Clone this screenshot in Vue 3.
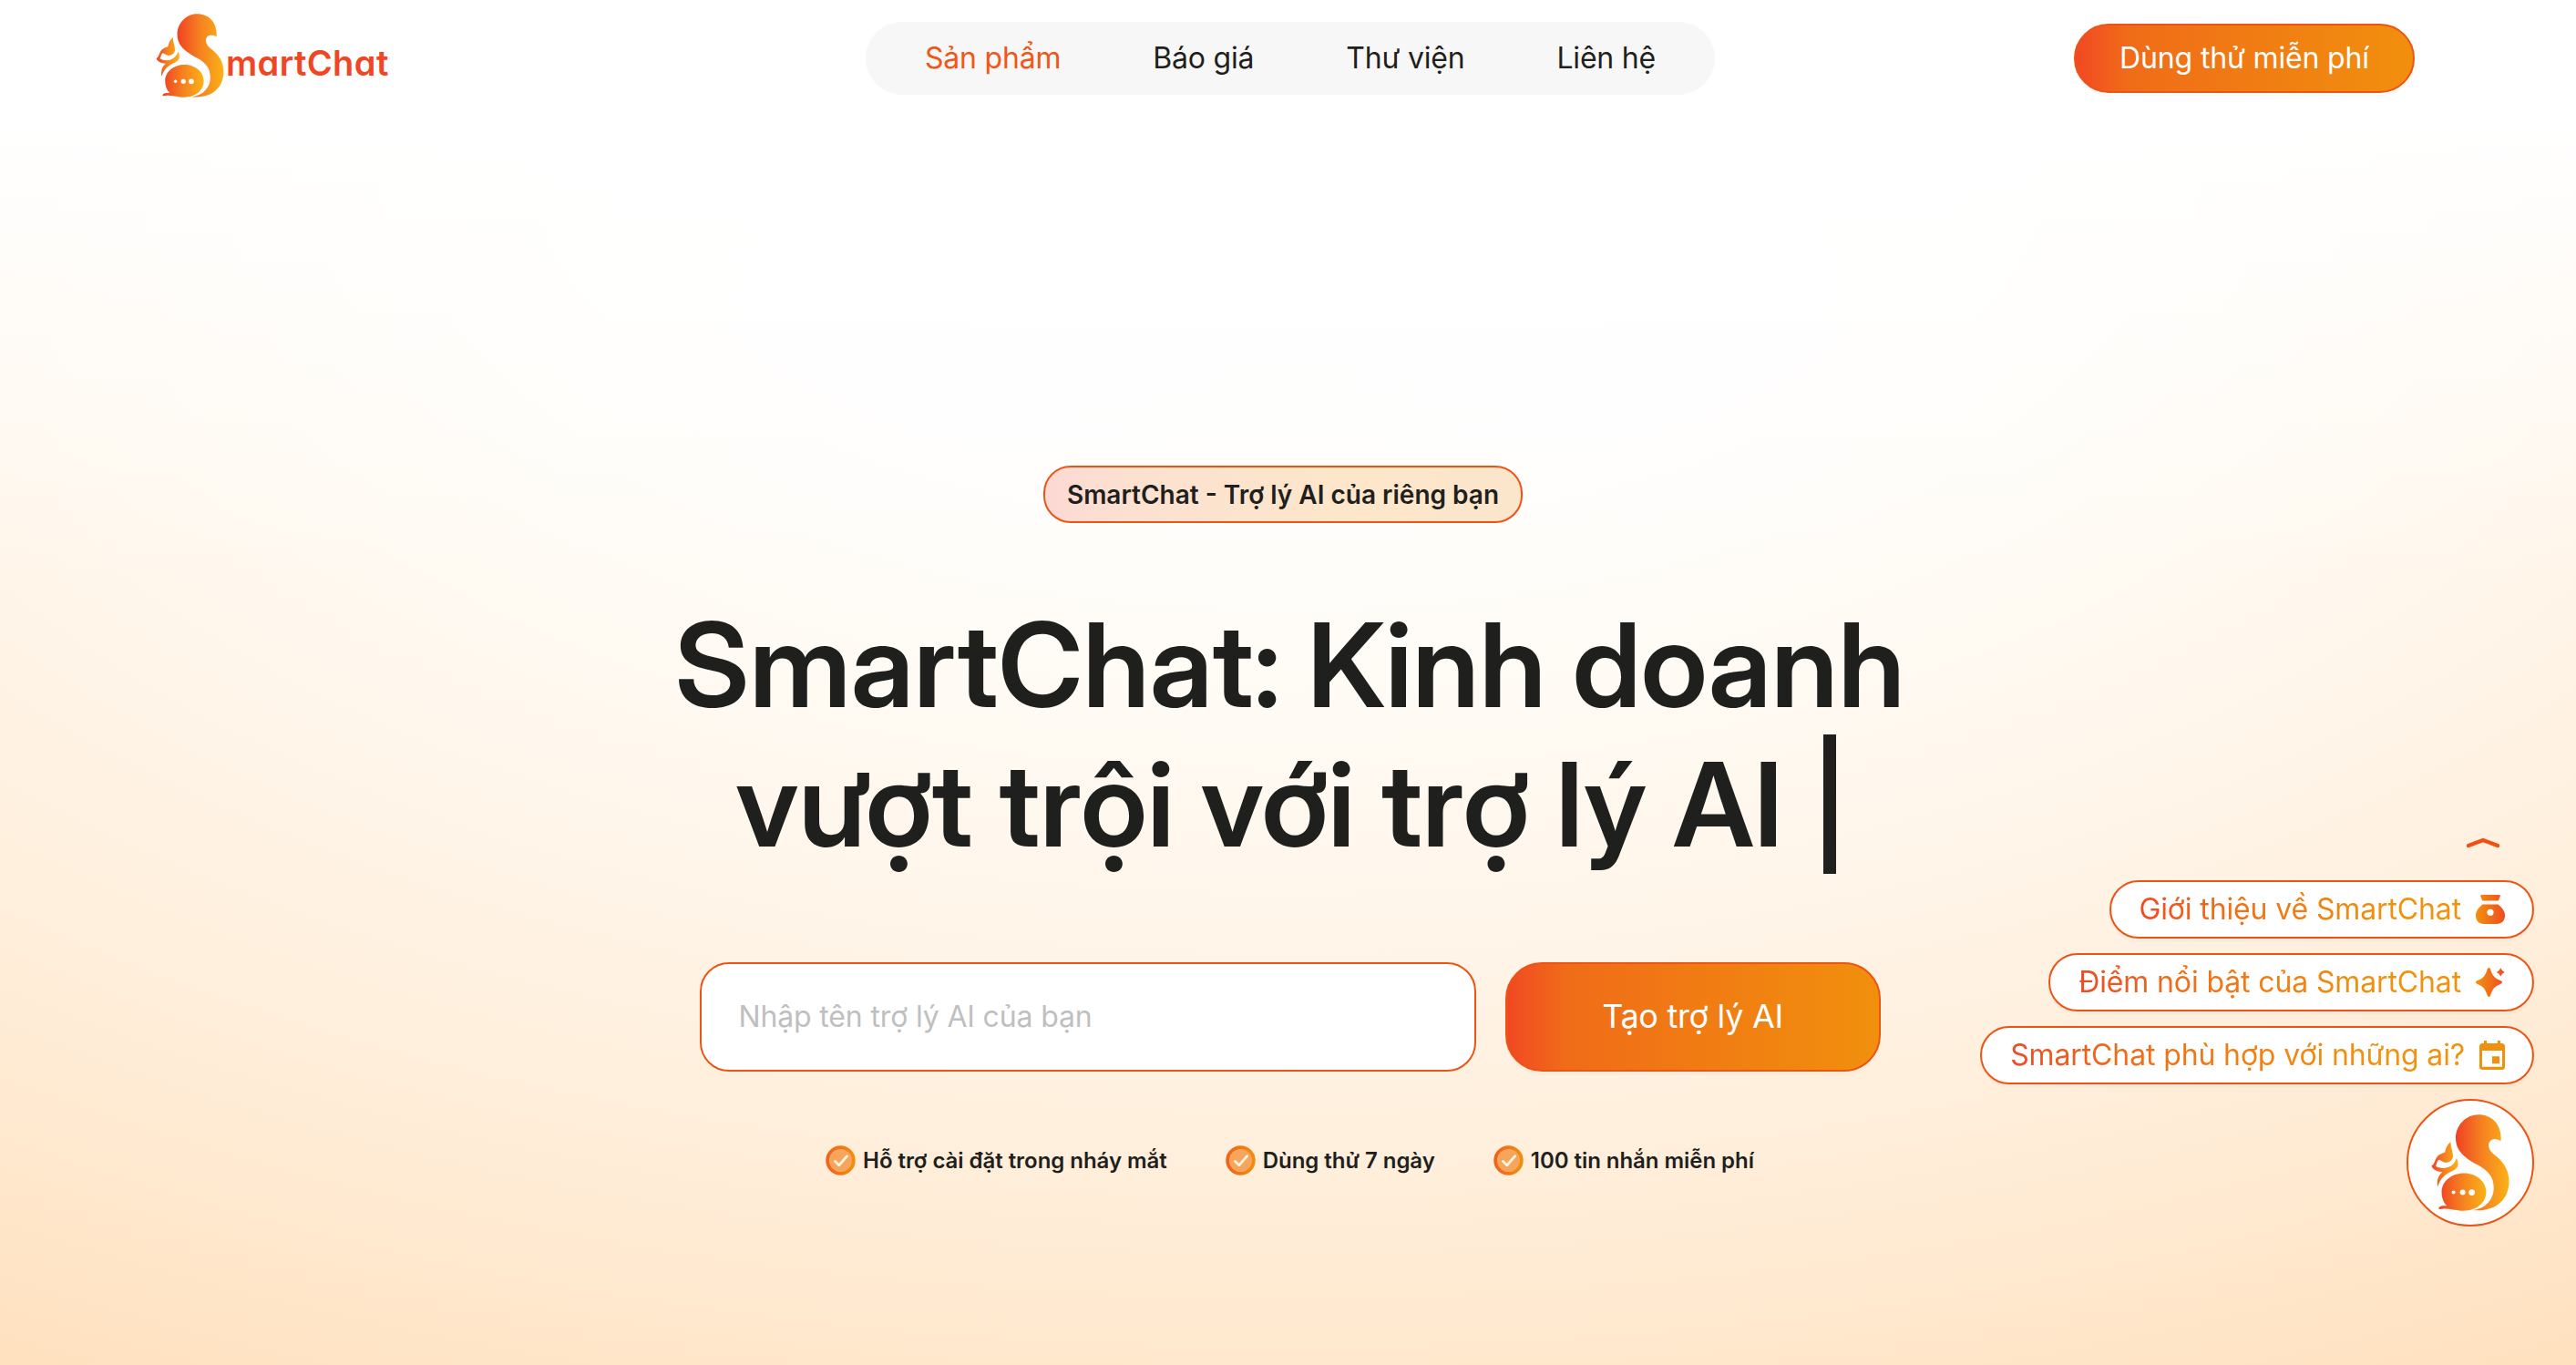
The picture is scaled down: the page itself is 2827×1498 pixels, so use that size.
<script setup>
const nav = ['Sản phẩm', 'Báo giá', 'Thư viện', 'Liên hệ']
const features = ['Hỗ trợ cài đặt trong nháy mắt', 'Dùng thử 7 ngày', '100 tin nhắn miễn phí']
const prompts = [
  { text: 'Giới thiệu về SmartChat', icon: 'bag' },
  { text: 'Điểm nổi bật của SmartChat', icon: 'spark' },
  { text: 'SmartChat phù hợp với những ai?', icon: 'calendar' },
]
</script>

<template>
  <div class="page">
    <svg class="defs" width="0" height="0" aria-hidden="true">
      <defs>
        <linearGradient id="mark"><stop offset="0" stop-color="#ef4123" /><stop offset=".5" stop-color="#f58220" /><stop offset="1" stop-color="#fbb216" /></linearGradient>
        <linearGradient id="glyph" gradientUnits="userSpaceOnUse" x1="0" x2="32" y1="0" y2="0"><stop offset="0" stop-color="#f1920d" /><stop offset=".8" stop-color="#f05a1e" /><stop offset="1" stop-color="#f04a24" /></linearGradient>
        <linearGradient id="tick"><stop offset="0" stop-color="#f0601c" /><stop offset="1" stop-color="#f1900d" /></linearGradient>
        <symbol id="squirrel" viewBox="146 98 256 317">
          <path fill="url(#mark)" d="M374 186C379 136 349 99 301 99C259 99 226 135 226 176C226 222 262 244 300 265C335 284 351 305 351 340C351 375 325 408 281 412C350 420 401 383 401 318C401 280 383 252 350 228C325 208 332 180 354 179C363 179 370 182 374 186Z" />
          <path fill="url(#mark)" d="M253 291C294 291 326 318 326 353C326 388 294 414 253 414C229 414 215 408 198 408C187 407 180 408 171 409C169 402 177 398 186 398L197 398C187 388 180 373 180 353C180 318 212 291 253 291Z" />
          <circle cx="219" cy="354" r="6" fill="#fff" /><circle cx="249" cy="354" r="9" fill="#fff" /><circle cx="279" cy="354" r="10" fill="#fff" />
          <path fill="url(#mark)" d="M210 188C208 205 218 218 217 236C216 250 204 257 190 256C183 254 178 248 170 247C163 254 165 262 160 268C180 280 218 278 229 241C238 264 235 274 214 284C195 293 176 305 167 336C163 315 168 300 182 287C164 286 150 278 147 267C156 262 157 250 163 240C171 228 181 227 191 222C193 210 198 197 210 188Z" />
        </symbol>
      </defs>
    </svg>

    <header>
      <div class="logo">
        <svg class="logo-mark"><use href="#squirrel" /></svg>
        <span class="logo-text">martChat</span>
      </div>
      <nav>
        <a v-for="(n, i) in nav" :key="n" :class="{ active: i === 0 }">{{ n }}</a>
      </nav>
      <button class="cta trial">Dùng thử miễn phí</button>
    </header>

    <main>
      <div class="chip">SmartChat - Trợ lý AI của riêng bạn</div>
      <h1>SmartChat: Kinh doanh<br />vượt trội với trợ lý AI <i class="caret"></i></h1>
      <div class="form">
        <input placeholder="Nhập tên trợ lý AI của bạn" />
        <button class="cta create">Tạo trợ lý AI</button>
      </div>
      <ul>
        <li v-for="f in features" :key="f">
          <svg width="33" height="33" viewBox="0 0 33 33"><circle cx="16.5" cy="16.5" r="16.2" fill="url(#tick)" /><circle cx="16.5" cy="16.5" r="12.6" fill="#f5a55c" /><path d="M10.5 17.5L14.8 21.8L23.5 11.8" fill="none" stroke="#fff4e2" stroke-width="2.8" stroke-linecap="round" stroke-linejoin="round" /></svg>
          <span>{{ f }}</span>
        </li>
      </ul>
    </main>

    <aside>
      <svg class="up" width="36" height="12" viewBox="0 0 36 12"><path d="M2 9L18 3L34 9" fill="none" stroke="#ee5213" stroke-width="4.4" stroke-linecap="round" stroke-linejoin="round" /></svg>
      <div v-for="p in prompts" :key="p.icon" class="prompt">
        <span>{{ p.text }}</span>
        <svg v-if="p.icon === 'bag'" width="32" height="32" viewBox="0 0 32 32"><path fill="url(#glyph)" d="M6.5 0H25.5Q27.5 0 26.6 2L24.8 6.6H7.2L5.4 2Q4.5 0 6.5 0Z" /><path fill="url(#glyph)" fill-rule="evenodd" d="M7.5 10.6H24.5C29 14.5 32 18 32 22.5C32 28.5 28.5 32 23 32H9C3.5 32 0 28.5 0 22.5C0 18 3 14.5 7.5 10.6ZM16 15.7A3.6 3.6 0 1 0 16 22.9A3.6 3.6 0 1 0 16 15.7Z" /></svg>
        <svg v-else-if="p.icon === 'spark'" width="32" height="32" viewBox="0 0 32 32"><path fill="url(#glyph)" d="M14.4 0C15.4 0 15.9 1 16.3 2.2C18.7 9.3 20.8 11.3 26.5 13.8C28 14.5 29 15.2 29 16C29 16.8 28 17.5 26.5 18.2C20.8 20.7 18.7 22.7 16.3 29.8C15.9 31 15.4 32 14.4 32C13.4 32 12.9 31 12.5 29.8C10.1 22.7 8.2 20.7 2.5 18.2C1 17.5 0 16.8 0 16C0 15.2 1 14.5 2.5 13.8C8.2 11.3 10.1 9.3 12.5 2.2C12.9 1 13.4 0 14.4 0Z" /><path fill="url(#glyph)" d="M27.3 0.3Q28.6 3.6 31.6 4.9Q28.6 6.2 27.3 9.5Q26 6.2 22.8 4.9Q26 3.6 27.3 0.3Z" /></svg>
        <svg v-else class="cal" width="28" height="32" viewBox="0 0 28 32"><path fill="#f1900d" fill-rule="evenodd" d="M5 0H8V3H20V0H23V3H24.5Q28 3 28 6.5V28.5Q28 32 24.5 32H3.5Q0 32 0 28.5V6.5Q0 3 3.5 3H5ZM3 11V28.8H25V11ZM14 17.3H22V25.3H14Z" /></svg>
      </div>
      <div class="bubble"><svg width="86" height="106"><use href="#squirrel" /></svg></div>
    </aside>
  </div>
</template>

<style>
body { margin: 0; overflow: hidden; }
</style>

<style scoped>
.page {
  position: relative;
  width: 2827px;
  height: 1498px;
  overflow: hidden;
  box-sizing: border-box;
  font-family: Inter, "Noto Sans", sans-serif;
  color: #1f1f1d;
  background:
    linear-gradient(180deg, #fff 0, #fff 128px, rgba(255, 255, 255, .55) 330px, rgba(255, 255, 255, 0) 640px),
    radial-gradient(125% 125% at 50% 10%, #fff 0%, #fffefd 20%, #fffdf9 27%, #fff6eb 45%, #fff4e7 49%, #ffecd6 65%, #ffe1bf 82%);
}
.defs { position: absolute; }
* { box-sizing: border-box; }
header {
  display: grid;
  grid-template-columns: 779px 932px 1fr;
  align-items: center;
  height: 128px;
  padding: 0 177px 0 171px;
}
.logo { display: flex; height: 92px; margin-top: -6px; }
.logo-mark { width: 75px; height: 92px; }
.logo-text {
  margin: 34px 0 0 2px;
  font-size: 38px;
  font-weight: 600;
  line-height: 40px;
  letter-spacing: .4px;
  color: #f04623;
  font-feature-settings: "cv11";
}
nav {
  display: flex;
  align-items: center;
  justify-content: center;
  gap: 101px;
  height: 80px;
  padding-bottom: 1px;
  border-radius: 40px;
  background: #f7f7f7;
  font-size: 32px;
  letter-spacing: -.2px;
}
nav .active { color: #f25516; }
.cta {
  display: flex;
  align-items: center;
  justify-content: center;
  padding: 0 0 2px;
  border: 2px solid #ed5414;
  color: #fff;
  font-family: inherit;
  font-weight: 400;
  letter-spacing: -.15px;
  background: linear-gradient(90deg, #f14724 0%, #f06c18 16%, #f1900d 100%) border-box;
  box-shadow: 0 4px 0 rgba(0, 0, 0, .02);
}
.trial { justify-self: end; width: 374px; height: 76px; border-radius: 38px; font-size: 32px; }
main { display: flex; flex-direction: column; align-items: center; padding: 383px 0 0 4px; }
.chip {
  display: flex;
  align-items: center;
  justify-content: center;
  width: 526px;
  height: 63px;
  margin-right: 15px;
  border: 2px solid #ed5414;
  border-radius: 30px;
  font-size: 28px;
  font-weight: 600;
  background: linear-gradient(90deg, #fcd9d3 0%, #fce1d1 18%, #fde6ca 60%, #fce6cb 100%);
}
h1 {
  height: 304px;
  margin: 80px 0 0;
  font-family: "Inter Display", Inter, sans-serif;
  font-size: 128px;
  font-weight: 600;
  line-height: 152px;
  letter-spacing: 0;
  text-align: center;
  white-space: nowrap;
}
.caret { display: inline-block; width: 14px; height: 153px; margin: 0 9px 0 15px; vertical-align: -30px; background: #1f1f1d; }
.form { display: flex; gap: 32px; margin-top: 98px; }
input {
  width: 852px;
  height: 120px;
  padding: 0 41px 2px;
  border: 2px solid #ed5414;
  border-radius: 32px;
  background: #fff;
  font: 400 32px Inter, "Noto Sans", sans-serif;
  letter-spacing: -.15px;
}
input::placeholder { color: #bfbfbf; opacity: 1; }
.create { width: 412px; height: 120px; border-radius: 40px; font-size: 36px; letter-spacing: -.3px; }
ul { display: flex; gap: 64px; margin: 81px 0 0; padding: 0; list-style: none; font-size: 24px; font-weight: 600; letter-spacing: -.04px; }
li { display: flex; align-items: center; gap: 8px; }
aside {
  position: absolute;
  right: 46px;
  top: 919px;
  display: flex;
  flex-direction: column;
  align-items: flex-end;
  gap: 16px;
}
.up { margin: 0 38px 19px 0; }
.prompt {
  display: flex;
  align-items: center;
  gap: 16px;
  height: 64px;
  padding: 0 30px 0 31px;
  border: 2px solid #ed5414;
  border-radius: 32px;
  background: #fff;
  box-shadow: 0 4px 0 rgba(0, 0, 0, .02);
  font-size: 32px;
  font-weight: 400;
  letter-spacing: -.13px;
}
.prompt span {
  padding-bottom: 2px;
  background: linear-gradient(90deg, #f04a24, #f06c18 25%, #f1900d 75%, #f1920d);
  background-clip: text;
  color: transparent;
}
.bubble {
  display: flex;
  align-items: center;
  justify-content: center;
  width: 140px;
  height: 140px;
  border: 2px solid #ed5414;
  border-radius: 50%;
  background: #fff;
}
</style>
